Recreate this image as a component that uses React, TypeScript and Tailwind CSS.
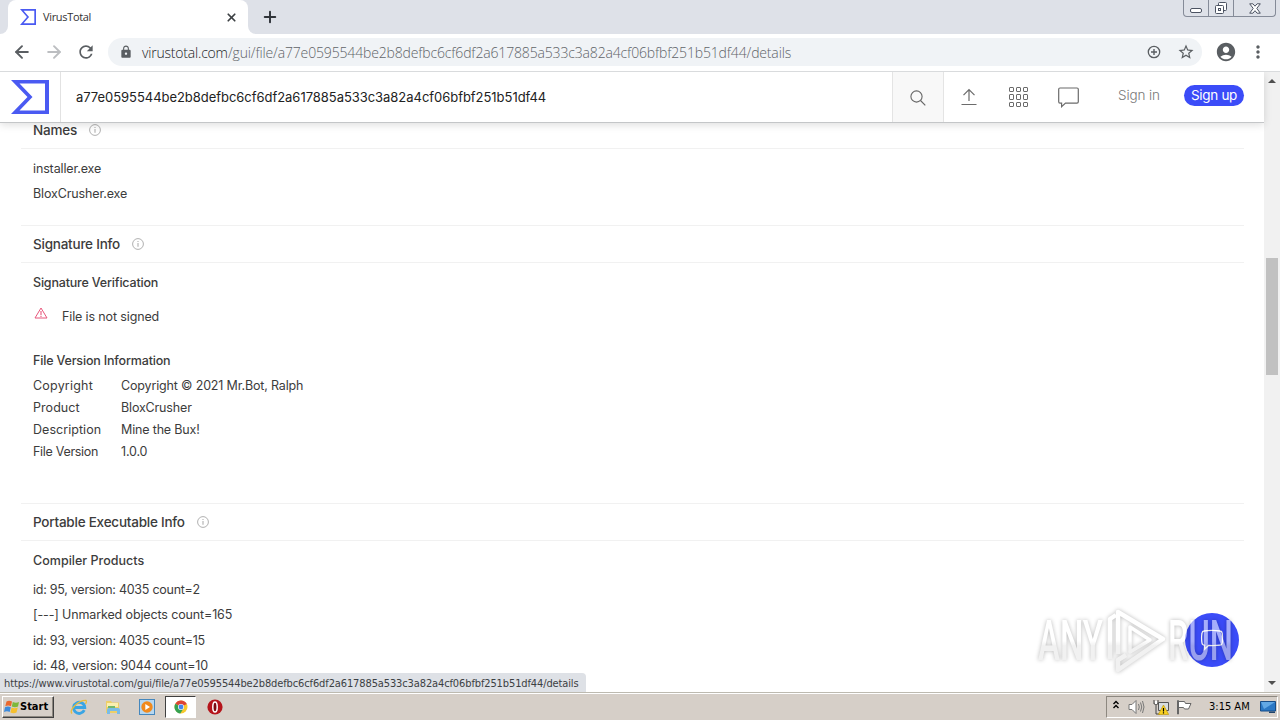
import { ArrowLeft, ArrowRight, Plus, X } from 'lucide-react';
import { MdAccountCircle, MdLock, MdMoreVert, MdRefresh, MdStarBorder } from 'react-icons/md';

const hash = 'a77e0595544be2b8defbc6cf6df2a617885a533c3a82a4cf06bfbf251b51df44';

const versionInfo = [
  { label: 'Copyright', value: 'Copyright © 2021 Mr.Bot, Ralph', spacing: 'tracking-[0.2px]' },
  { label: 'Product', value: 'BloxCrusher', spacing: 'tracking-[0.05px]' },
  { label: 'Description', value: 'Mine the Bux!', spacing: 'tracking-[0.05px]' },
  { label: 'File Version', value: '1.0.0', spacing: 'tracking-[-0.3px]' },
];

function VtLogo({ className }: { className: string }) {
  return (
    <svg viewBox="0 0 38 34" className={className} preserveAspectRatio="none">
      <path
        fillRule="evenodd"
        fill="#4a5af2"
        d="M0 0H38V34H0L16.5 17ZM8.5 3.5L21.5 17L8.5 30.5H34V3.5Z"
      />
    </svg>
  );
}

function InfoIcon() {
  return (
    <svg viewBox="0 0 12 12" className="h-3 w-3" fill="none" stroke="#b0b0b0">
      <circle cx="6" cy="6" r="5.4" strokeWidth="1" />
      <path d="M6 5v3.8M6 3v1" strokeWidth="1.1" />
    </svg>
  );
}

function SectionTitle({ title }: { title: string }) {
  return (
    <div className="flex h-[37px] items-center gap-3 border-b border-[#f1f1f1] pl-3 text-[13.5px] font-medium tracking-[-0.23px]">
      <span>{title}</span>
      <InfoIcon />
    </div>
  );
}

function TabStrip() {
  return (
    <div className="flex h-[34px] shrink-0 justify-between bg-[#dee1e8]">
      <div className="flex">
        <div className="flex w-2 bg-white">
          <div className="flex-1 rounded-br-lg bg-[#dee1e8]" />
        </div>
        <div className="flex w-[240px] items-center rounded-t-lg bg-white pl-3 pr-[10px]">
          <VtLogo className="h-4 w-4" />
          <span className="ml-[7px] flex-1 font-['Open_Sans',sans-serif] text-[11px] tracking-[-0.33px] text-[#333]">
            VirusTotal
          </span>
          <X size={13} strokeWidth={3.2} className="text-[#3c4043]" />
        </div>
        <div className="flex w-2 bg-white">
          <div className="flex-1 rounded-bl-lg bg-[#dee1e8]" />
        </div>
        <div className="flex w-7 items-center justify-center">
          <Plus size={18} strokeWidth={2.6} className="text-[#30343a]" />
        </div>
      </div>

      {/* Window buttons */}
      <div className="mr-1 flex h-[17px] w-[93px] rounded-b-[4px] border border-t-0 border-[#858b98] text-[#4c5362]">
        <div className="flex w-[25px] items-end justify-center border-r border-[#858b98] pb-[3px]">
          <div className="h-[5px] w-3 rounded-[2px] border border-[#4c5362] bg-white" />
        </div>
        <div className="flex w-[25px] items-center justify-center border-r border-[#858b98]">
          <svg viewBox="0 0 14 14" className="h-[14px] w-[14px]" fill="#fff" stroke="currentColor">
            <rect x="4.5" y="1.5" width="8" height="8" rx="1" />
            <rect x="1.5" y="4.5" width="8" height="8" rx="1" />
            <rect x="4.5" y="7.5" width="2" height="2" />
          </svg>
        </div>
        <div className="flex flex-1 items-center justify-center">
          <svg viewBox="0 0 12 11" className="h-[11px] w-3" fill="#fff" stroke="currentColor">
            <path d="M0.7.8H3.9L6 3.2 8.1.8h3.2L7.8 5.4l3.5 4.8H8.1L6 7.7 3.9 10.2H.7L4.2 5.4Z" />
          </svg>
        </div>
      </div>
    </div>
  );
}

function Toolbar() {
  return (
    <div className="flex h-[38px] shrink-0 items-center border-b border-[#d9dbdd] bg-white pb-px pl-3 text-[#5a5e62]">
      <ArrowLeft size={20} strokeWidth={2.3} />
      <ArrowRight size={20} strokeWidth={2.3} className="ml-3 text-[#bcbec1]" />
      <MdRefresh size={20} className="ml-3" />
      <div className="ml-3 flex h-7 w-[1094px] items-center rounded-full bg-[#f0f3f6] pl-[11px]">
        <MdLock size={14} />
        <div className="ml-[9px] flex flex-1 whitespace-nowrap font-['Open_Sans',sans-serif] text-[14px] font-light">
          <span className="w-[86px] tracking-[-0.2px] text-[#202124]">virustotal.com</span>
          <span className="tracking-[-0.157px] text-[#5f6368]">/gui/file/{hash}/details</span>
        </div>
        <svg viewBox="0 0 14 14" className="h-[14px] w-[14px]" fill="none" stroke="currentColor">
          <circle cx="7" cy="7" r="5.7" strokeWidth="1.3" />
          <path d="M7 4v6M4 7h6" strokeWidth="1.4" />
        </svg>
        <MdStarBorder size={18} className="ml-4 mr-[7px]" />
      </div>
      <MdAccountCircle size={22} className="ml-[13px]" />
      <MdMoreVert size={20} className="ml-[11px]" />
    </div>
  );
}

function SiteHeader() {
  return (
    <header className="relative z-10 flex h-[51px] w-[1264px] border-b border-[#c4c6c8] bg-white shadow-[0_2px_8px_rgba(0,0,0,0.13)]">
      <div className="flex w-[61px] items-center border-r border-[#e2e2e2] pl-[11px]">
        <VtLogo className="h-[34px] w-[38px]" />
      </div>
      <div className="flex flex-1 items-center pl-[15px] pt-[2px] text-[13px] tracking-[-0.04px] text-[#222]">
        {hash}
      </div>
      <div className="flex w-[52px] items-center justify-center border-x border-[#e4e4e4] bg-[#f8f8f8] pt-px">
        <svg viewBox="0 0 16 16" className="h-4 w-4" fill="none" stroke="#666" strokeWidth="1.1">
          <circle cx="6.5" cy="6.5" r="5.6" />
          <path d="M10.5 10.5 15.3 15.3" />
        </svg>
      </div>
      <div className="flex w-[320px] items-center text-[#6b6b6b]">
        <svg viewBox="0 0 16 18" className="ml-[17px] h-[18px] w-4" fill="none" stroke="currentColor">
          <path d="M8 13V2M2.5 7.2 8 1.7l5.5 5.5M.5 16.5h15" strokeWidth="1.2" />
        </svg>
        <div className="ml-8 grid grid-cols-3 gap-[2px]">
          {Array.from({ length: 9 }, (_, i) => (
            <span key={i} className="h-[5.5px] w-[5px] rounded-[1px] border border-[#6b6b6b]" />
          ))}
        </div>
        <svg viewBox="0 0 21 21" className="ml-[30px] h-[21px] w-[21px]" fill="none" stroke="currentColor">
          <path
            d="M2 1h17q1.3 0 1.3 1.3v12.5q0 1.3-1.3 1.3H7.5L3.6 19.7V16.1H2Q.7 16.1.7 14.8V2.3Q.7 1 2 1Z"
            strokeWidth="1.2"
          />
        </svg>
        <span className="ml-[39px] w-[42px] whitespace-nowrap pb-[3px] text-[13.5px] font-light tracking-[-0.1px] text-[#777]">
          Sign in
        </span>
        <span className="mb-[3px] ml-6 flex h-[21px] w-[60px] items-center justify-center rounded-full bg-[#3b4cf8] text-[13.5px] tracking-[-0.3px] text-white">
          Sign up
        </span>
      </div>
    </header>
  );
}

function Details() {
  return (
    <main className="-mt-[11px] ml-[21px] w-[1223px] text-[12.5px] leading-[25px] tracking-[-0.13px] text-[#3c3c3c]">
      <SectionTitle title="Names" />
      <div className="h-[76px] pl-3 pt-[7px]">
        <p>installer.exe</p>
        <p>BloxCrusher.exe</p>
      </div>

      <div className="border-t border-[#f1f1f1]">
        <SectionTitle title="Signature Info" />
        <div className="h-[240px] pl-3 pt-[7px]">
          <h3 className="font-medium tracking-[-0.18px]">Signature Verification</h3>
          <div className="mt-[9px] flex items-center">
            <svg viewBox="0 0 14 12" className="-mt-[7px] ml-px h-3 w-[14px]" fill="none" stroke="#e8577c">
              <path d="M7 1 13 11H1Z" strokeWidth="1" />
              <path d="M7 4v4M7 8.8v1.1" strokeWidth="1.1" />
            </svg>
            <span className="ml-[14px]">File is not signed</span>
          </div>
          <h3 className="mt-[19px] font-medium tracking-[-0.17px]">File Version Information</h3>
          <dl className="mt-px">
            {versionInfo.map((row) => (
              <div key={row.label} className="flex h-[22px] items-center">
                <dt className={`w-[88px] ${row.spacing}`}>{row.label}</dt>
                <dd className="tracking-[-0.16px]">{row.value}</dd>
              </div>
            ))}
          </dl>
        </div>
      </div>

      <div className="border-t border-[#f1f1f1]">
        <SectionTitle title="Portable Executable Info" />
        <div className="pl-3 pt-[7px]">
          <h3 className="font-medium tracking-[0.02px]">Compiler Products</h3>
          <div className="mt-1 leading-[25.4px]">
            <p className="tracking-[-0.26px]">id: 95, version: 4035 count=2</p>
            <p>[---] Unmarked objects count=165</p>
            <p className="tracking-[-0.26px]">id: 93, version: 4035 count=15</p>
            <p className="tracking-[-0.2px]">id: 48, version: 9044 count=10</p>
          </div>
        </div>
      </div>
    </main>
  );
}

function Scrollbar() {
  return (
    <div className="flex w-4 flex-col items-center bg-[#f1f1f1]">
      <div className="mt-[7px] border-x-4 border-b-4 border-x-transparent border-b-[#505050]" />
      <div className="mt-[175px] h-[117px] w-3 bg-[#c1c1c1]" />
      <div className="mb-[7px] mt-auto border-x-4 border-t-4 border-x-transparent border-t-[#505050]" />
    </div>
  );
}

function Watermark() {
  return (
    <svg
      viewBox="0 0 210 70"
      className="absolute left-[1032px] top-[534px] h-[70px] w-[210px] opacity-55 drop-shadow-[0_0_2px_rgba(0,0,0,0.5)]"
    >
      <defs>
        <linearGradient id="fade" gradientUnits="userSpaceOnUse" x1="0" y1="5" x2="0" y2="65">
          <stop offset="0.5" stopColor="#fff" />
          <stop offset="0.58" stopColor="#e6e6e6" />
        </linearGradient>
      </defs>
      <g fill="url(#fade)" fontFamily="Roboto, sans-serif" fontSize="56" fontWeight="500">
        <text x="6" y="54" textLength="65" lengthAdjust="spacingAndGlyphs">
          ANY
        </text>
        <text x="136" y="54" textLength="65" lengthAdjust="spacingAndGlyphs">
          RUN
        </text>
      </g>
      <g fill="none" stroke="url(#fade)" strokeLinejoin="round">
        <path d="M78 53V13L84 9" strokeWidth="4.5" />
        <path d="M86 48V6l45 27-45 31V54l8-5" strokeWidth="4.500" />
        <path d="M98 21v25l20-12Z" strokeWidth="3.500" />
      </g>
    </svg>
  );
}

function Taskbar() {
  return (
    <div className="flex h-7 shrink-0 items-center border-t border-[#bdbab0] bg-[#d6cfc8] shadow-[inset_0_1px_0_#fff] font-['DejaVu_Sans_Condensed','DejaVu_Sans',sans-serif] text-[11px] text-black">
      <div className="ml-[2px] mt-px flex h-[22px] w-[52px] items-center border border-b-[#404040] border-l-white border-r-[#404040] border-t-white pl-px shadow-[inset_-1px_-1px_0_#8d8880]">
        <svg viewBox="0 0 16 16" className="h-4 w-4">
          <path d="M2.5 2.5Q5 .8 8 2.5L7 7.3Q4.200 5.800 1.300 7.300Z" fill="#e9682f" />
          <path d="M8.800 3Q12 4.600 15 3L14 7.600Q11 9 7.800 7.600Z" fill="#7db83c" />
          <path d="M1 8.200Q4 6.700 6.800 8.200L5.700 13Q3 11.600 0 13Z" fill="#3d8bdc" />
          <path d="M7.600 8.600Q10.500 10 13.800 8.600L12.500 13.500Q9.500 15 6.400 13.400Z" fill="#f6c02f" />
        </svg>
        <span className="pt-px font-bold">Start</span>
      </div>

      {/* Internet Explorer */}
      <svg viewBox="0 0 18 18" className="ml-4 h-[18px] w-[18px]" fill="none">
        <path d="M14.300 12.200A5.600 5.600 0 1 1 14.800 9.500H5" stroke="#3aa5e4" strokeWidth="2.800" />
        <path d="M2 15.500Q-.5 13 5 7.500T16 2.300Q17 3.500 15.500 6" stroke="#e9bd3c" strokeWidth="1.300" />
      </svg>
      {/* Explorer */}
      <svg viewBox="0 0 18 18" className="ml-4 h-[18px] w-[18px]">
        <path d="M2 3h5l1 1.500h7V15H2Z" fill="#edcf68" />
        <path d="M3 5h11v4H3Z" fill="#fbefb0" />
        <path d="M4 8h7v2H4Z" fill="#72b86c" />
        <path d="M3 16v-4q0-2 2-2h9q2 0 2 2v4h-3v-3H6v3Z" fill="#79bce8" />
      </svg>
      {/* Media player */}
      <div className="ml-[17px] flex h-4 w-4 items-center justify-center border border-[#4587bd] bg-[#b6d7f0]">
        <svg viewBox="0 0 12 12" className="h-3 w-3">
          <circle cx="6" cy="6" r="5.700" fill="#f18a1d" />
          <path d="M4.300 3v6L9 6Z" fill="#fff" />
        </svg>
      </div>
      {/* Chrome, the active window */}
      <div className="ml-[10px] mt-px flex h-[22px] w-[31px] items-center justify-center border border-b-white border-l-[#404040] border-r-white border-t-[#404040] bg-white">
        <svg viewBox="0 0 14 14" className="h-[14px] w-[14px]">
          <circle cx="7" cy="7" r="6.500" fill="#f7c92e" />
          <path d="M7 7 1.300 3.800A6.500 6.500 0 0 1 12.800 4Z" fill="#dc4437" />
          <path d="M7 7 1.300 3.800A6.500 6.500 0 0 0 6.300 13.500L9.500 8.500Z" fill="#35a152" />
          <circle cx="7" cy="7" r="3" fill="#fff" />
          <circle cx="7" cy="7" r="2.400" fill="#4385ee" />
        </svg>
      </div>
      {/* Opera */}
      <svg viewBox="0 0 16 16" className="ml-[11px] mt-px h-4 w-4">
        <circle cx="8" cy="8" r="7.600" fill="#b5141b" />
        <ellipse cx="8" cy="8" rx="2.200" ry="5" fill="#7c0a10" stroke="#fff" strokeWidth="1.500" />
      </svg>

      {/* Tray */}
      <div className="ml-auto mr-[2px] flex h-[22px] w-[172px] items-center border border-b-white border-l-[#8d8880] border-r-white border-t-[#8d8880] pl-[5px]">
        <svg viewBox="0 0 8 9" className="-mt-1 h-[9px] w-2" fill="none" stroke="#000" strokeWidth="1.400">
          <path d="M1.500 4 4 1.500 6.500 4M1.500 8 4 5.500 6.500 8" />
        </svg>
        <svg viewBox="0 0 17 16" className="ml-2 h-4 w-[17px]" fill="none" stroke="#777">
          <path d="M1 5.500h3L8 1.500v13L4 10.500H1Z" fill="#fff" />
          <path d="M10.500 5q1.500 3 0 6M12.500 3.500q2.500 4.500 0 9M14.500 2q3 6 0 12" />
        </svg>
        <svg viewBox="0 0 16 16" className="ml-2 h-4 w-4" fill="none">
          <path d="M5.500 3.500h10v8h-10Z" fill="#d8dde0" stroke="#555" />
          <path d="M1 1v4h4V1M3 5v10h4" stroke="#444" />
          <path d="M2 2h2v3H2Z" fill="#fff" />
          <path d="M10.500 6 15.700 15.500H5.300Z" fill="#f8d020" stroke="#b99000" strokeWidth=".6" />
          <path d="M10.500 9v3.500M10.500 13.300v1.200" stroke="#000" strokeWidth="1.200" />
        </svg>
        <svg viewBox="0 0 16 16" className="ml-[7px] h-4 w-4" fill="#fff" stroke="#666">
          <path d="M1.500 1.500h1V15h-1ZM2.500 2.500h6l1 2h5.500L12.500 10h-4L7.500 8.500h-5Z" />
        </svg>
        <span className="ml-[17px] w-[43px] whitespace-nowrap pt-[2px]">3:15 AM</span>
        <svg viewBox="0 0 16 14" className="ml-[8px] h-[14px] w-4">
          <path d="M.5 1.500h15v9.500H.5Z" fill="#2b78c5" stroke="#174c87" />
          <path d="M1 2h14L4 9Z" fill="#62a8e5" />
          <path d="M9 11.500h6v1.500H9Z" fill="#1f436b" />
        </svg>
      </div>
    </div>
  );
}

export default function App() {
  return (
    <div className="flex h-[720px] w-[1280px] flex-col overflow-hidden bg-white font-[Inter,sans-serif]">
      <TabStrip />
      <Toolbar />
      <div className="relative flex h-[620px] shrink-0 overflow-hidden">
        <div className="w-[1264px]">
          <SiteHeader />
          <Details />
        </div>
        <Scrollbar />

        {/* Chat button */}
        <div className="absolute left-[1185px] top-[541px] flex h-[54px] w-[54px] items-center justify-center rounded-full bg-[#3b4cf8]">
          <svg viewBox="0 0 24 22" className="h-[22px] w-6" fill="none" stroke="#fff" strokeWidth="1.300">
            <path d="M4 2Q12 .6 20 2q2 .2 2.200 2.200.6 5 0 9.800-.2 2-2.200 2.200-6 .7-11.500.3L4.500 20.300l.2-4Q2.200 16 2 14 1.200 9 2 4.200 2.200 2.200 4 2Z" />
          </svg>
        </div>
        <Watermark />

        {/* Link target bubble */}
        <div className="absolute bottom-0 left-0 flex h-[19px] w-[586px] items-center whitespace-nowrap rounded-tr-[4px] bg-[#dee1e6] pl-1 pt-[3px] font-['DejaVu_Sans_Condensed','DejaVu_Sans',sans-serif] text-[11px] tracking-[-0.12px] text-[#3c4043]">
          https://www.virustotal.com/gui/file/{hash}/details
        </div>
      </div>
      <Taskbar />
    </div>
  );
}
